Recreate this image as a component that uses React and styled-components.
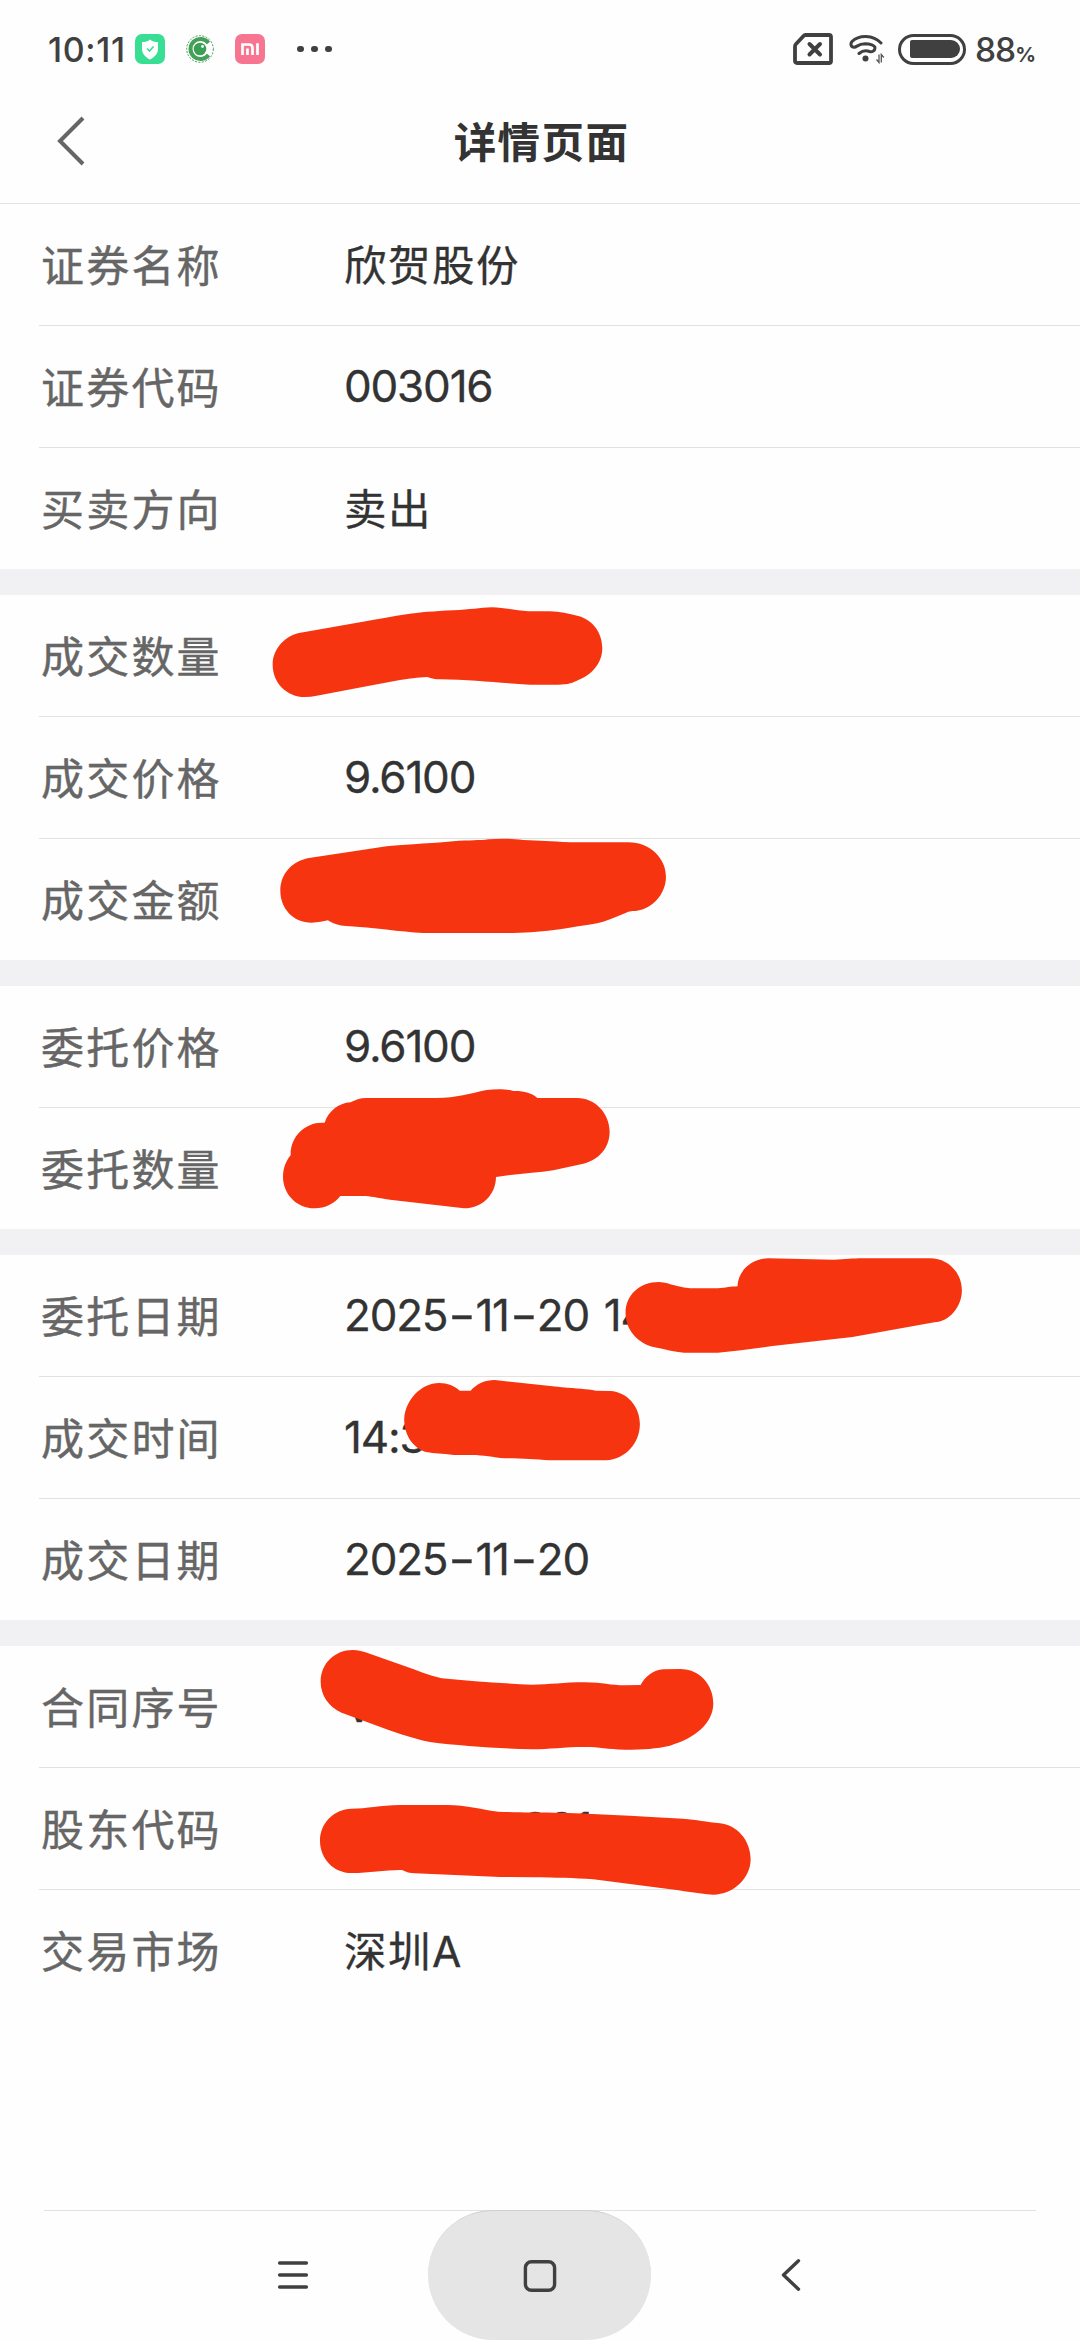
import { Fragment } from "react";
import styled, { createGlobalStyle } from "styled-components";

const sections = [
  [
    { label: "证券名称", value: "欣贺股份" },
    { label: "证券代码", value: "003016", numeric: true },
    { label: "买卖方向", value: "卖出" },
  ],
  [
    { label: "成交数量", value: "" },
    { label: "成交价格", value: "9.6100", numeric: true },
    { label: "成交金额", value: "" },
  ],
  [
    { label: "委托价格", value: "9.6100", numeric: true },
    { label: "委托数量", value: "" },
  ],
  [
    { label: "委托日期", value: "2025-11-20 14", numeric: true },
    { label: "成交时间", value: "14:3", numeric: true },
    { label: "成交日期", value: "2025-11-20", numeric: true },
  ],
  [
    { label: "合同序号", value: "V", numeric: true },
    { label: "股东代码", value: "001".padStart(15), numeric: true },
    { label: "交易市场", value: "深圳A" },
  ],
];

const App = () => {
  return (
    <Screen>
      <GlobalStyle />
      <StatusBar />
      <Header>
        <BackIcon viewBox="0 0 28 50">
          <path d="M26 2 L3 25 L26 48" />
        </BackIcon>
        <h1>详情页面</h1>
      </Header>
      <Main>
        {sections.map((rows, i) => (
          <Section key={i}>
            {rows.map((row) => (
              <Row key={row.label}>
                <Label>{row.label}</Label>
                <Value $numeric={row.numeric}>
                  {row.value.split("-").map((part, j) => (
                    <Fragment key={j}>
                      {j > 0 && <Dash>-</Dash>}
                      {part}
                    </Fragment>
                  ))}
                </Value>
              </Row>
            ))}
          </Section>
        ))}
      </Main>
      <NavBar />
      <Scribbles />
    </Screen>
  );
};

const StatusBar = () => (
  <Status>
    <Time>10:11</Time>
    <AppIcons>
      <svg width="30" height="30" viewBox="0 0 30 30">
        <rect width="30" height="30" rx="7" fill="#39de95" />
        <path
          d="M15 5.5 C17 7.5 20 8 23 8 V15 C23 20 19 23.5 15 25.5 C11 23.5 7 20 7 15 V8 C10 8 13 7.5 15 5.5Z"
          fill="#fff"
        />
        <path d="M12 14.5 L14.5 17 L18.5 12.5" fill="none" stroke="#39de95" strokeWidth="1.6" />
      </svg>
      <svg width="30" height="30" viewBox="0 0 30 30">
        <circle cx="15" cy="15" r="13.3" fill="none" stroke="#45a05a" strokeWidth="1" strokeDasharray="2 1.4" />
        <path d="M23.5 9 A10 10 0 1 0 23.5 21" fill="none" stroke="#45a05a" strokeWidth="4" />
        <circle cx="15" cy="15" r="6.3" fill="#3aa052" />
        <circle cx="17.5" cy="12.5" r="1.4" fill="#fff" />
      </svg>
      <svg width="30" height="30" viewBox="0 0 30 30">
        <rect width="30" height="30" rx="7" fill="#f87592" />
        <path
          d="M7.5 21 V10.5 H14 Q17.5 10.5 17.5 14 V21 M12.5 14.5 V21 M22.5 9.2 V21"
          fill="none"
          stroke="#fff"
          strokeWidth="2.7"
        />
      </svg>
    </AppIcons>
    <Dots>
      <i />
      <i />
      <i />
    </Dots>
    <SystemIcons>
      <svg width="42" height="32" viewBox="0 0 42 32">
        <path
          d="M13.5 2 H37 Q39 2 39 4 V28 Q39 30 37 30 H5 Q3 30 3 28 V13.5 Q3 12 4 11 L11.5 3 Q12.3 2 13.5 2Z"
          fill="none"
          stroke="#404040"
          strokeWidth="3.8"
        />
        <path d="M17.5 11 L28 21.5 M28 11 L17.5 21.5" stroke="#404040" strokeWidth="4" strokeLinecap="round" />
      </svg>
      <svg width="36" height="30" viewBox="0 0 36 30">
        {/* the two outer waves are joined at their left end */}
        <g fill="none" stroke="#404040" strokeWidth="3" strokeLinecap="round">
          <path d="M32 9 C24 0.5 10 0.5 3 7.5 C1 10 2 13.5 5.5 13.2 C8 13 9 10 16 9.8 C21 9.8 26 11.5 26 14 C26 17 22.5 18.5 20.5 17.5 C17 16 13 17 10 19.5" />
        </g>
        <circle cx="16.5" cy="24.5" r="3" fill="#404040" />
        <path d="M30 20.5 V28.5 L27.5 25.5 M32.3 28.5 V20.5 L34.8 23.5" fill="none" stroke="#555" strokeWidth="1.3" />
      </svg>
      <Battery>
        <span />
      </Battery>
      <Percent>
        88<small>%</small>
      </Percent>
    </SystemIcons>
  </Status>
);

const NavBar = () => (
  <Nav>
    <NavButton>
      <svg width="32" height="32" viewBox="0 0 32 32">
        <path d="M2.6 4 H29.4 M2.6 16 H29.4 M2.6 28 H29.4" />
      </svg>
    </NavButton>
    <NavButton $active>
      <svg width="34" height="34" viewBox="0 0 34 34">
        <rect x="2.4" y="2.8" width="29.2" height="28.4" rx="6" />
      </svg>
    </NavButton>
    <NavButton>
      <svg width="32" height="34" viewBox="0 0 32 34">
        <path d="M23.5 2.8 L8.5 17 L23.5 31.2" />
      </svg>
    </NavButton>
  </Nav>
);

// Marker strokes that hide the private values
const Scribbles = () => (
  <Overlay viewBox="0 0 1080 2340">
    <g transform="translate(240 590) scale(0.3333)">
      <path d="M195 321 C140 321 98 278 98 224 C98 175 138 133 190 127 L360 97 C480 76 520 66 640 61 C690 59 720 53 755 52 C800 54 830 61 865 64 L930 64 C960 65 985 71 1015 78 C1060 90 1087 130 1087 175 C1087 220 1055 255 1015 270 C1000 278 985 284 955 284 L870 284 C780 279 700 270 600 268 C585 268 575 265 562 261 C530 262 510 266 480 270 L380 289 L230 317 Q212 321 195 321Z" />
      <path d="M215 998 C160 998 121 955 121 902 C121 850 158 810 212 803 L440 769 C480 764 550 762 640 754 C690 750 720 752 745 748 C780 745 810 745 850 750 C900 753 930 753 990 757 L1165 757 C1230 757 1278 805 1278 860 C1278 915 1232 963 1178 963 L1165 965 C1140 975 1100 995 1060 1002 C1030 1007 990 1012 960 1018 C910 1025 870 1028 820 1029 L550 1029 C480 1025 400 1013 320 1008 C290 1007 275 998 264 991 C250 993 235 998 215 998Z" />
    </g>
    <g transform="translate(240 940) scale(0.3333)">
      <path d="M225 805 C170 805 129 762 129 710 C129 685 138 662 152 646 C150 590 195 548 245 548 L254 548 C265 515 295 489 332 487 C345 480 360 474 380 474 L590 474 C650 474 690 460 740 450 C770 446 800 447 820 453 C850 452 875 458 892 474 L1012 474 C1065 474 1109 520 1109 575 C1109 625 1075 660 1030 671 L940 691 C890 699 830 701 768 711 C768 765 725 805 672 805 L450 779 C410 773 390 768 370 768 L301 768 C283 791 255 805 225 805Z" />
    </g>
    <g transform="translate(320 1240) scale(0.4209 0.3333)">
      <path d="M805 126 C820 126 832 133 842 136 C860 142 870 145 885 145 L945 145 C965 143 975 140 992 139 C992 95 1025 55 1065 55 L1220 59 C1250 58 1265 55 1290 55 L1450 55 C1490 55 1525 95 1525 152 C1525 200 1495 245 1460 247 L1265 291 L1075 318 C1030 326 990 333 945 338 L865 338 C840 336 820 328 795 322 C755 310 726 270 726 218 C726 165 760 126 805 126Z" />
      <path d="M283 429 C303 429 320 438 332 452 L358 452 C372 432 392 420 415 420 L575 442 C610 446 635 447 655 452 L690 453 C730 456 760 500 760 552 C760 610 725 658 680 661 L545 661 C510 658 480 655 440 655 C410 652 390 645 360 645 L318 645 C290 641 270 640 255 637 C225 628 200 590 200 537 C203 480 240 429 283 429Z" />
    </g>
    <g transform="translate(300 1610) scale(0.3333)">
      <path d="M158 120 C175 120 190 125 205 130 L320 170 C350 180 385 196 425 205 C510 213 600 220 695 224 C750 224 790 217 855 217 C910 218 930 226 975 226 L1022 225 C1035 200 1060 180 1090 178 L1140 177 C1200 177 1240 225 1240 280 C1240 340 1185 385 1110 407 C1070 416 1030 419 975 419 C920 418 900 411 855 411 C790 411 750 418 695 418 C600 415 480 408 390 396 C330 384 280 365 225 345 L125 308 C85 290 62 255 62 215 C62 160 105 120 158 120Z" />
      <path d="M155 596 C200 596 240 586 300 585 L440 585 C500 585 550 600 595 605 C660 608 700 608 760 608 C870 610 1000 617 1150 626 C1190 629 1220 636 1260 640 C1310 645 1352 690 1352 748 C1352 805 1300 854 1240 854 C1190 850 1150 842 1100 836 L880 808 C820 804 770 803 700 802 L600 801 L345 790 C330 790 318 786 306 780 C260 779 210 789 155 789 C100 789 60 745 60 692 C60 640 100 598 155 596Z" />
    </g>
  </Overlay>
);

export default App;

/* ---------------------------- STYLED COMPONENTS --------------------------- */

const GlobalStyle = createGlobalStyle`
  * {
    box-sizing: border-box;
  }

  body {
    margin: 0;
    background-color: #fefefe;
    font-family: Inter, "Noto Sans CJK SC", sans-serif;
  }
`;

const Screen = styled.div`
  position: relative;
  display: flex;
  flex-direction: column;
  width: 1080px;
  height: 2340px;
  overflow: hidden;
  background-color: #fefefe;
`;

const Status = styled.div`
  display: flex;
  align-items: center;
  height: 80px;
  padding: 18px 45px 0 48px;
  color: #404040;
`;

const Time = styled.span`
  width: 87px;
  padding-top: 1px;
  font-size: 34px;
  font-weight: 500;
  letter-spacing: 0.6px;
  white-space: nowrap;
`;

const AppIcons = styled.div`
  display: flex;
  gap: 20px;
`;

const Dots = styled.div`
  display: flex;
  gap: 7.5px;
  margin-left: 32px;

  i {
    width: 6.5px;
    height: 6.5px;
    border-radius: 50%;
    background-color: #404040;
  }
`;

const SystemIcons = styled.div`
  display: flex;
  align-items: center;
  margin-left: auto;

  svg:nth-child(2) {
    margin: 0 13px 0 15px;
  }
`;

const Battery = styled.div`
  width: 68px;
  height: 31px;
  padding: 3.5px 3px 3.5px 9px;
  border: 3px solid #404040;
  border-radius: 16px;

  span {
    display: block;
    width: 50px;
    height: 18px;
    border-radius: 2px 9px 9px 2px;
    background-color: #404040;
  }
`;

const Percent = styled.span`
  margin-left: 9px;
  padding-top: 1px;
  font-size: 33.5px;
  font-weight: 500;
  letter-spacing: -1px;

  small {
    font-size: 20.5px;
    font-weight: 700;
  }
`;

const Header = styled.header`
  position: relative;
  display: flex;
  align-items: center;
  justify-content: center;
  height: 124px;
  padding: 0 0 4px 3px;
  border-bottom: 1px solid #e2e2e2;

  h1 {
    margin: 0;
    font-size: 42.5px;
    font-weight: 700;
    letter-spacing: 1.4px;
    color: #333;
  }
`;

const BackIcon = styled.svg`
  position: absolute;
  left: 57px;
  top: 36px;
  width: 28px;
  height: 50px;
  fill: none;
  stroke: #666;
  stroke-width: 4;
`;

const Main = styled.main`
  flex: 1;
`;

const Section = styled.section`
  & + & {
    border-top: 26px solid #f1f1f3;
  }
`;

const Row = styled.div`
  display: flex;
  align-items: center;
  height: 122px;
  margin-left: 39px;
  padding-top: 2px;
  border-bottom: 1px solid #e2e2e2;
  line-height: 60px;
  white-space: pre;

  &:last-child {
    height: 121px;
    border-bottom: none;
  }
`;

const Label = styled.span`
  width: 305px;
  padding-left: 2px;
  font-size: 43px;
  letter-spacing: 2.2px;
  color: #666;
  -webkit-text-stroke: 0.4px #666;
`;

const Value = styled.span`
  padding-bottom: ${({ $numeric }) => ($numeric ? "3px" : "0")};
  font-size: ${({ $numeric }) => ($numeric ? "44px" : "42.5px")};
  letter-spacing: ${({ $numeric }) => ($numeric ? "-1.2px" : "1.5px")};
  word-spacing: 3.6px;
  color: #333;
  -webkit-text-stroke: 0.3px #333;
`;

const Dash = styled.span`
  display: inline-block;
  width: 28px;
  text-align: center;
  transform: scaleX(1.35);
`;

const Nav = styled.nav`
  display: flex;
  justify-content: center;
  gap: 24px;
  height: 130px;
  margin: 0 44px;
  padding-right: 2px;
  border-top: 1px solid #e2e2e2;
`;

const NavButton = styled.button`
  display: flex;
  align-items: center;
  justify-content: center;
  width: 223px;
  height: 130px;
  margin-top: -1px;
  padding: 0;
  border: none;
  border-top: ${({ $active }) => ($active ? "1px solid #d0d0d0" : "none")};
  border-radius: 65px;
  background-color: ${({ $active }) => ($active ? "#e5e5e5" : "transparent")};

  &:first-child {
    padding-left: 2px;
  }

  &:nth-child(2) {
    padding-left: 2px;
  }

  &:last-child {
    padding-left: 10px;
  }

  svg {
    fill: none;
    stroke: #404040;
    stroke-width: 3.4;
    stroke-linecap: round;
    stroke-linejoin: round;
  }
`;

const Overlay = styled.svg`
  position: absolute;
  top: 0;
  left: 0;
  width: 1080px;
  height: 2340px;
  fill: #f63410;
  pointer-events: none;
`;
